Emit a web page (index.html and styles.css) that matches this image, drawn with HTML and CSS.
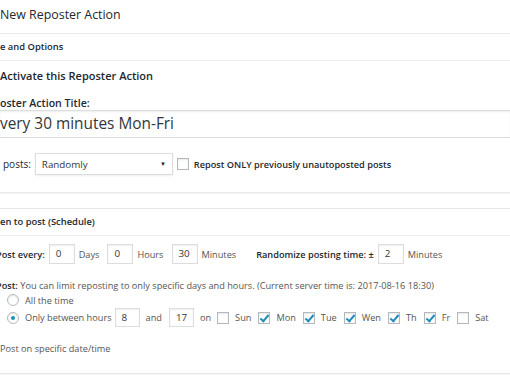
FILE: index.html
```html
<!DOCTYPE html>
<html lang="en">
<head>
    <meta charset="UTF-8">
    <title>New Reposter Action</title>
    <link rel="stylesheet" href="styles.css">
</head>
<body>
    <div class="page">
        <h2 class="page-title">New Reposter Action</h2>

        <div class="box">
            <h3 class="box-head">e and Options</h3>
            <div class="box-body">
                <div class="activate">Activate this Reposter Action</div>
                <div class="field-label">oster Action Title:</div>
                <div class="title-input">very 30 minutes Mon-Fri</div>
                <div class="row select-row">
                    <span class="lbl">posts:</span>
                    <div class="select">Randomly<span class="arrow">&#9660;</span></div>
                    <span class="cb"></span>
                    <span class="lbl strong">Repost ONLY previously unautoposted posts</span>
                </div>
            </div>
        </div>

        <div class="box box-schedule">
            <h3 class="box-head">en to post (Schedule)</h3>
            <div class="box-body">
                <div class="row every-row">
                    <span class="lbl strong cut">Post every:</span>
                    <span class="num">0</span><span class="unit">Days</span>
                    <span class="num">0</span><span class="unit">Hours</span>
                    <span class="num">30</span><span class="unit">Minutes</span>
                    <span class="lbl strong rand">Randomize posting time: &plusmn;</span>
                    <span class="num">2</span><span class="unit">Minutes</span>
                </div>
                <div class="note"><b class="cut">Post:</b> You can limit reposting to only specific days and hours. (Current server time is: 2017-08-16 18:30)</div>
                <div class="radio-row"><span class="radio"></span><span>All the time</span></div>
                <div class="radio-row hours-row">
                    <span class="radio on"></span><span>Only between hours</span>
                    <span class="num small">8</span><span class="unit">and</span>
                    <span class="num small">17</span><span class="unit on-word">on</span>
                    <span class="cb"></span><span class="day">Sun</span>
                    <span class="cb on"></span><span class="day">Mon</span>
                    <span class="cb on"></span><span class="day">Tue</span>
                    <span class="cb on"></span><span class="day">Wen</span>
                    <span class="cb on"></span><span class="day">Th</span>
                    <span class="cb on"></span><span class="day">Fr</span>
                    <span class="cb"></span><span class="day">Sat</span>
                </div>
                <div class="specific">Post on specific date/time</div>
            </div>
        </div>
    </div>
</body>
</html>
```

FILE: styles.css
```css
body {
    margin: 0;
    background: #fff;
    font-family: 'Open Sans', sans-serif;
    font-size: 9.2px;
    color: #555;
    overflow: hidden;
}

.page {
    width: 510px;
    height: 382px;
    overflow: hidden;
    white-space: nowrap;
}

.page-title {
    margin: 0;
    height: 33px;
    line-height: 30px;
    font-size: 12.4px;
    font-weight: 400;
    color: #23282d;
    border-bottom: 1px solid #eaeaea;
}

.box {
    border-bottom: 1px solid #e8e8e8;
    box-shadow: 0 1px 1px rgba(0, 0, 0, 0.04);
}

.box-head {
    margin: 0;
    height: 26px;
    line-height: 26px;
    font-size: 9.4px;
    font-weight: 600;
    color: #23282d;
    border-bottom: 1px solid #eee;
}

.box-body {
    padding-bottom: 17px;
}

.activate {
    margin-top: 7px;
    line-height: 16px;
    font-size: 11px;
    font-weight: 600;
    color: #23282d;
}

.field-label {
    margin-top: 12px;
    line-height: 14px;
    font-size: 10.6px;
    font-weight: 600;
    color: #23282d;
}

.title-input {
    height: 26px;
    line-height: 26px;
    font-size: 15.4px;
    color: #32373c;
    border-top: 1px solid #ddd;
    border-bottom: 1px solid #ddd;
    box-shadow: inset 0 1px 2px rgba(0, 0, 0, 0.07);
}

.row {
    display: flex;
    align-items: center;
}

.select-row {
    margin-top: 15px;
    height: 22px;
    padding-left: 3px;
}

.lbl {
    color: #23282d;
    font-size: 10px;
}

.strong {
    font-weight: 600;
    font-size: 9.2px;
}

.select {
    box-sizing: border-box;
    width: 138px;
    height: 22px;
    margin-left: 4px;
    padding: 0 6px;
    display: flex;
    align-items: center;
    justify-content: space-between;
    border: 1px solid #ddd;
    box-shadow: 0 1px 2px rgba(0, 0, 0, 0.07);
    color: #32373c;
    font-size: 9.8px;
}

.arrow {
    font-size: 6px;
    color: #222;
}

.cb {
    box-sizing: border-box;
    width: 12px;
    height: 12px;
    margin: 0 5px 0 4px;
    border: 1px solid #b4b9be;
    box-shadow: inset 0 1px 2px rgba(0, 0, 0, 0.1);
    background: #fff;
    display: inline-block;
    position: relative;
    flex: none;
}

.cb.on::after {
    content: "";
    position: absolute;
    left: 3px;
    top: 0;
    width: 3px;
    height: 7px;
    border-right: 2px solid #1e8cbe;
    border-bottom: 2px solid #1e8cbe;
    transform: rotate(40deg);
}

.box-schedule {
    margin-top: 15px;
    border-top: 1px solid #e8e8e8;
}

.every-row {
    margin-top: 8px;
    height: 20px;
}

.cut {
    margin-left: -4px;
}

.num {
    box-sizing: border-box;
    width: 26px;
    height: 20px;
    margin-left: 4px;
    padding-left: 6px;
    line-height: 18px;
    border: 1px solid #ddd;
    box-shadow: inset 0 1px 2px rgba(0, 0, 0, 0.07);
    color: #32373c;
    font-size: 9.8px;
    display: inline-block;
    flex: none;
}

.num.small {
    width: 25px;
    height: 19px;
    line-height: 17px;
}

.unit {
    margin: 0 4px 0 4px;
}

.rand {
    margin-left: 16px;
}

.note {
    margin-top: 15px;
    line-height: 14px;
}

.note b {
    font-weight: 600;
    color: #23282d;
}

.radio-row {
    display: flex;
    align-items: center;
    height: 14px;
    padding-left: 7px;
}

.radio {
    box-sizing: border-box;
    width: 12px;
    height: 12px;
    margin-right: 6px;
    border: 1px solid #b4b9be;
    border-radius: 50%;
    box-shadow: inset 0 1px 2px rgba(0, 0, 0, 0.1);
    display: flex;
    align-items: center;
    justify-content: center;
    flex: none;
}

.radio.on::after {
    content: "";
    width: 4px;
    height: 4px;
    border-radius: 50%;
    background: #1e8cbe;
}

.hours-row {
    height: 21px;
}

.hours-row .num {
    margin-left: 3px;
}

.hours-row .unit {
    margin: 0 4px 0 6px;
}

.hours-row .on-word {
    margin-right: 6px;
}

.hours-row .cb {
    margin: 0 6px 0 0;
}

.day {
    margin-right: 7px;
}

.specific {
    margin-top: 14px;
    line-height: 14px;
}
```
